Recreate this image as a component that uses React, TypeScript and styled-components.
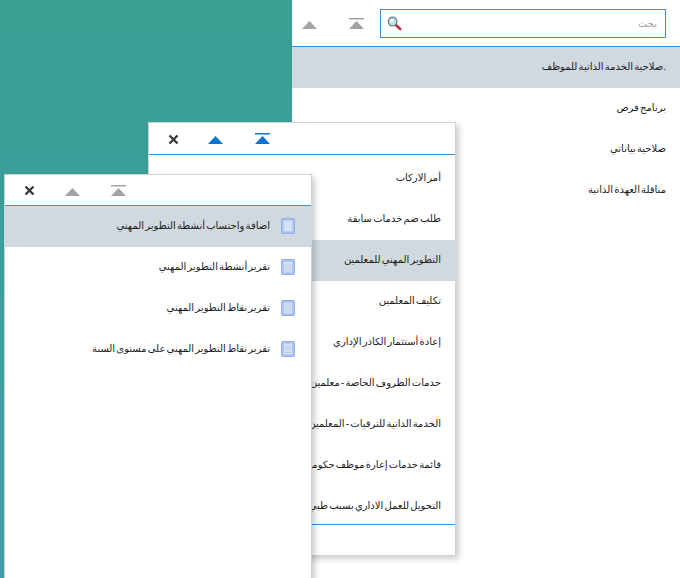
import React from "react";
import styled, { createGlobalStyle } from "styled-components";

const GlobalStyle = createGlobalStyle`
  html, body {
    margin: 0;
    padding: 0;
    background: #ffffff;
    overflow: hidden;
  }
`;

const Desktop = styled.div`
  position: relative;
  width: 680px;
  height: 578px;
  overflow: hidden;
  background: #ffffff;
  font-family: "Liberation Sans", "DejaVu Sans", sans-serif;
  font-size: 10px;
  word-spacing: -1.6px;
  color: #1c1c1c;
`;

const Backdrop = styled.div`
  position: absolute;
  left: 0;
  top: 0;
  bottom: 0;
  width: 292px;
  background: linear-gradient(180deg, #39a093, #3f9fa8);
`;

const Panel = styled.div<{ $left: number; $top: number; $width: number; $height: number; $shadow?: boolean }>`
  position: absolute;
  left: ${(p) => p.$left}px;
  top: ${(p) => p.$top}px;
  width: ${(p) => p.$width}px;
  height: ${(p) => p.$height}px;
  box-sizing: border-box;
  display: flex;
  flex-direction: column;
  background: #ffffff;
  border: ${(p) => (p.$shadow ? "1px solid #d4d4d4" : "none")};
  box-shadow: ${(p) => (p.$shadow ? "3px 3px 6px rgba(0, 0, 0, 0.2)" : "none")};
`;

const Toolbar = styled.div<{ $height: number }>`
  flex: none;
  box-sizing: border-box;
  height: ${(p) => p.$height}px;
  display: flex;
  align-items: center;
  border-bottom: 1px solid #3d93d8;
`;

const ToolButton = styled.span<{ $ml: number }>`
  display: flex;
  margin-left: ${(p) => p.$ml}px;
`;

const CloseButton = styled(ToolButton)`
  margin-top: 1px;
`;

const SearchBox = styled.div`
  box-sizing: border-box;
  width: 286px;
  height: 29px;
  margin-left: 16px;
  display: flex;
  align-items: center;
  justify-content: space-between;
  padding: 0 8px 0 6px;
  border: 1px solid #3d8ed4;
`;

const SearchLabel = styled.span`
  direction: rtl;
  color: #a0a0a0;
`;

const List = styled.div<{ $pad?: number }>`
  flex: 1;
  min-height: 0;
  overflow: hidden;
  padding-top: ${(p) => p.$pad ?? 0}px;
`;

const Row = styled.div<{ $active?: boolean; $indent: number }>`
  box-sizing: border-box;
  height: 41px;
  display: flex;
  align-items: center;
  justify-content: flex-end;
  gap: 11px;
  padding-right: ${(p) => p.$indent}px;
  padding-bottom: 2px;
  background: ${(p) => (p.$active ? "#d1d9e0" : "transparent")};
  white-space: nowrap;
`;

const RowText = styled.span`
  direction: rtl;
`;

const ListEnd = styled.div`
  flex: none;
  height: 31px;
  box-sizing: border-box;
  border-top: 1px solid #3d93d8;
`;

const CloseIcon = () => (
  <svg width="11" height="11" viewBox="0 0 11 11">
    <path d="M1.5 1.5L9.5 9.5M9.5 1.5L1.5 9.5" stroke="#3a3a3a" strokeWidth="2.4" />
  </svg>
);

const UpIcon = ({ color }: { color: string }) => (
  <svg width="15" height="11" viewBox="0 0 15 11">
    <path d="M7.5 3L15 11H0z" fill={color} />
  </svg>
);

const TopIcon = ({ color }: { color: string }) => (
  <svg width="15" height="11" viewBox="0 0 15 11">
    <rect x="0" y="0" width="15" height="1.5" fill={color} />
    <path d="M7.5 3L15 11H0z" fill={color} />
  </svg>
);

const SearchIcon = () => (
  <svg width="15" height="15" viewBox="0 0 15 15">
    <path d="M8.5 8.5L13.2 13.2" stroke="#c0282f" strokeWidth="2.6" strokeLinecap="round" />
    <circle cx="5.6" cy="5.6" r="4.3" fill="#bfe0e6" stroke="#6b858f" strokeWidth="1.4" />
    <circle cx="4.6" cy="4.6" r="1.5" fill="#ffffff" />
  </svg>
);

const PageIcon = ({ lined }: { lined: boolean }) => (
  <svg width="14" height="16" viewBox="0 0 14 16">
    <rect x="0.5" y="0.5" width="13" height="15" rx="1.5" fill="#a9c3ef" stroke="#8fb0ea" />
    <rect x="2.5" y="2.5" width="9" height="11" fill="#d5e1f6" stroke="#b4c9f0" strokeWidth="0.6" />
    {lined && <path d="M3 5.5H11M3 7.5H11M3 9.5H11M3 11.5H11" stroke="#b9cbee" strokeWidth="0.7" />}
  </svg>
);

const mainItems = [
  ".صلاحية الخدمة الذاتية للموظف",
  "برنامج فرص",
  "صلاحية بياناتي",
  "مناقلة العهدة الذاتية",
];

const teacherItems = [
  "أمر الاركاب",
  "طلب ضم خدمات سابقة",
  "التطوير المهني للمعلمين",
  "تكليف المعلمين",
  "إعادة أستثمار الكادر الإداري",
  "خدمات الظروف الخاصة - معلمين",
  "الخدمة الذاتية للترقيات - المعلمين",
  "قائمة خدمات إعارة موظف حكومي",
  "التحويل للعمل الاداري بسبب طبي",
];

const devItems = [
  "اضافة واحتساب أنشطة التطوير المهني",
  "تقرير أنشطة التطوير المهني",
  "تقرير نقاط التطوير المهني",
  "تقرير نقاط التطوير المهني على مستوى السنة",
];

export default function App() {
  return (
    <Desktop>
      <GlobalStyle />
      <Backdrop />

      <Panel $left={292} $top={0} $width={388} $height={578}>
        <Toolbar $height={47}>
          <ToolButton $ml={10}><UpIcon color="#a3a3a3" /></ToolButton>
          <ToolButton $ml={32}><TopIcon color="#a3a3a3" /></ToolButton>
          <SearchBox>
            <SearchIcon />
            <SearchLabel>بحث</SearchLabel>
          </SearchBox>
        </Toolbar>
        <List>
          {mainItems.map((item, i) => (
            <Row key={item} $active={i === 0} $indent={14}>
              <RowText>{item}</RowText>
            </Row>
          ))}
        </List>
      </Panel>

      <Panel $left={148} $top={122} $width={308} $height={434} $shadow>
        <Toolbar $height={32}>
          <CloseButton $ml={19}><CloseIcon /></CloseButton>
          <ToolButton $ml={29}><UpIcon color="#0a74d0" /></ToolButton>
          <ToolButton $ml={32}><TopIcon color="#0a74d0" /></ToolButton>
        </Toolbar>
        <List $pad={3}>
          {teacherItems.map((item, i) => (
            <Row key={item} $active={i === 2} $indent={14}>
              <RowText>{item}</RowText>
            </Row>
          ))}
        </List>
        <ListEnd />
      </Panel>

      <Panel $left={4} $top={174} $width={308} $height={420} $shadow>
        <Toolbar $height={31}>
          <CloseButton $ml={19}><CloseIcon /></CloseButton>
          <ToolButton $ml={30}><UpIcon color="#a3a3a3" /></ToolButton>
          <ToolButton $ml={31}><TopIcon color="#a3a3a3" /></ToolButton>
        </Toolbar>
        <List>
          {devItems.map((item, i) => (
            <Row key={item} $active={i === 0} $indent={16}>
              <RowText>{item}</RowText>
              <PageIcon lined={i !== 0} />
            </Row>
          ))}
        </List>
      </Panel>
    </Desktop>
  );
}
